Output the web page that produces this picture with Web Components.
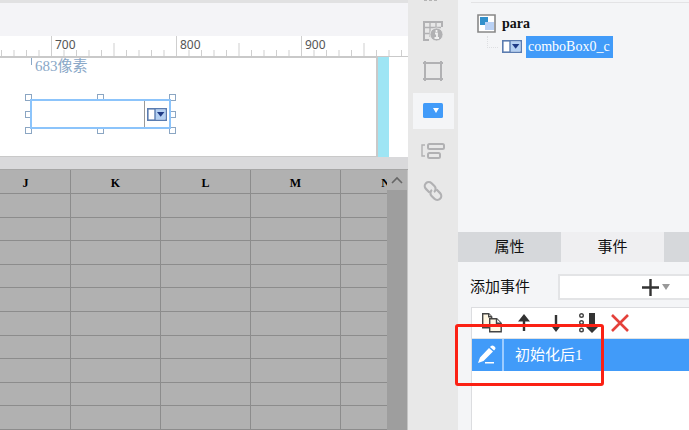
<!DOCTYPE html>
<html lang="zh-CN">
<head>
<meta charset="utf-8">
<title>报表设计器</title>
<style>
html,body{margin:0;height:100%}
body{font:15px/20px "Liberation Sans","Noto Sans CJK SC",sans-serif;color:#222;overflow:hidden}
</style>
</head>
<body>
<designer-app></designer-app>
<script>
const define=(name,html,setup)=>customElements.define(name,class extends HTMLElement{
  constructor(){
    super();
    const t=document.createElement('template');
    t.innerHTML='<style>*{box-sizing:border-box}button{border:0;padding:0;margin:0;background:none;font:inherit;color:inherit}svg{display:block;flex:none}</style>'+html;
    this.attachShadow({mode:'open'}).append(t.content.cloneNode(true));
    if(setup)setup(this,this.shadowRoot);
  }
});

define('combo-icon',`
<style>:host{display:block;flex:none}</style>
<svg width="20" height="13" viewBox="0 0 20 13"><rect x=".8" y=".8" width="18.4" height="11.4" fill="#fff" stroke="#5b7cb0" stroke-width="1.6"/><path d="M8 1.5h10.5v10H8z" fill="#b4d0f2"/><path d="M8 1v11" stroke="#5b7cb0" stroke-width="1.4"/><path d="M10 4h7.4l-3.7 4.8z" fill="#1f3b86"/></svg>`);

define('ruler-mark',`
<style>
:host{display:grid;flex:none;width:125px;height:20px;justify-content:start;overflow:hidden}
:host([partial]){width:51px;justify-content:end}
svg,span{grid-area:1/1}
span{padding-left:4px;font:12px/18px "Noto Sans",sans-serif;color:#555}
</style>
<svg width="125" height="20" viewBox="0 0 125 20" stroke="#cfcfcf"><path d="M.5 0v20M63 7v13M13 14v6M25.5 14v6M38 14v6M50.5 14v6M75.5 14v6M88 14v6M100.5 14v6M113 14v6"/></svg>
<span><slot></slot></span>`);

define('scale-ruler',`
<style>:host{display:flex;height:21px;background:#fff;border-bottom:1px solid #c9c9c9;overflow:hidden}</style>
<ruler-mark partial></ruler-mark><ruler-mark>700</ruler-mark><ruler-mark>800</ruler-mark><ruler-mark>900</ruler-mark>`);

define('selected-combo',`
<style>
:host{display:grid;grid-template-columns:151px;grid-template-rows:40px}
.box,.handles{grid-area:1/1}
.box{margin:5px;display:flex;border:2px solid #8cc4fb;background:#fff}
input{flex:1;min-width:0;border:0;padding:0 4px;outline:0;background:none;border-right:1px solid #999}
button{width:24px;flex:none;display:flex;align-items:center;justify-content:center}
.handles{display:grid;grid-template-columns:repeat(3,7px);grid-template-rows:repeat(3,7px);justify-content:space-between;align-content:space-between;pointer-events:none}
i{border:1px solid #8ba6c3;background:#fff}
i.none{visibility:hidden}
</style>
<div class="handles"><i></i><i></i><i></i><i></i><i class="none"></i><i></i><i></i><i></i><i></i></div>
<div class="box"><input aria-label="comboBox0_c"><button aria-label="展开"><combo-icon></combo-icon></button></div>`);

define('form-canvas',`
<style>
:host{display:flex;height:100px;background:#fff;overflow:hidden}
.page{flex:1;position:relative;border:solid #c9c9c9;border-width:1px 2px 1px 0;overflow:hidden}
.edge{width:11px;background:#9ee5f4;margin-right:19px}
.pos{position:absolute;left:31px;top:0;display:flex;color:#89a7c7;font:15px/16px "Liberation Serif","Noto Sans CJK SC",serif}
.pos::before{content:"";height:7px;border-left:1px solid #89a7c7;margin-right:3px}
selected-combo{position:absolute;left:25px;top:36px}
</style>
<div class="page"><span class="pos">683像素</span><selected-combo></selected-combo></div><div class="edge"></div>`);

define('sheet-grid',`
<style>
:host{display:flex;flex:1;min-height:0;background:#b1b1b1;border-top:1px solid #a6a6a6}
.view{flex:1;min-width:0;overflow:hidden}
table{table-layout:fixed;width:450px;height:100%;margin-left:-19px;border-collapse:separate;border-spacing:0}
th,td{padding:0;border:solid #8c8c8c;border-width:0 1px 1px 0}
th{height:24px;padding-top:4px;font:bold 12px/19px "Liberation Serif",serif;color:#000}
.scroll{width:21px;background:#9e9e9e;border-right:1px solid #c4c4c4}
button{display:flex;width:20px;height:20px;background:#b1b1b1;align-items:center;justify-content:center}
</style>
<div class="view"><table><thead><tr><th>J</th><th>K</th><th>L</th><th>M</th><th>N</th></tr></thead><tbody></tbody></table></div>
<div class="scroll"><button aria-label="向上滚动"><svg width="12" height="8" viewBox="0 0 12 8" fill="none" stroke="#666" stroke-width="1.6"><path d="M1 7l5-5 5 5"/></svg></button></div>`,
(el,root)=>{root.querySelector('tbody').innerHTML=('<tr>'+'<td></td>'.repeat(5)+'</tr>').repeat(10)});

define('design-pane',`
<style>
:host{display:flex;flex-direction:column;flex:1;min-width:0;background:#d9d9db}
.top{height:36px;background:#f4f4f7;border-top:3px solid #e1e1e2}
.gap{height:12px}
</style>
<div class="top"></div><scale-ruler></scale-ruler><form-canvas></form-canvas><div class="gap"></div><sheet-grid></sheet-grid>`);

define('tool-button',`
<style>
:host{display:block}
button{display:flex;width:41px;height:36px;align-items:center;justify-content:center;overflow:hidden}
:host([active]) button{background:#f4f5f7}
:host([cut]) button{height:9px;align-items:start}
</style>
<button><slot></slot></button>`,(el,root)=>root.querySelector('button').setAttribute('aria-label',el.getAttribute('label')));

define('side-toolbar',`
<style>:host{display:flex;flex-direction:column;align-items:center;gap:4px;flex:none;width:50px;background:#e8e8e8}</style>
<tool-button cut label="更多"><svg width="22" height="2" viewBox="0 0 22 2" fill="#b4b4b4"><path d="M2 0h3v1H2zM7 0h3v1H7zM12 0h3v1h-3z"/></svg></tool-button>
<tool-button label="单元格属性"><svg width="22" height="22" viewBox="0 0 22 22" fill="none" stroke="#b1b1b3" stroke-width="2"><path d="M7 20H2V2h18v5"/><path d="M2 7.5h17M8 2v15M2 13.5h6M14 2v6" stroke-width="1.3"/><circle cx="14.5" cy="14.5" r="6.5" fill="#b1b1b3" stroke="#e8e8e8" stroke-width=".8"/><path d="M14.5 10v2M13 13.5h2v4M12.5 18h4.5" stroke="#f1f1f1" stroke-width="1.8"/></svg></tool-button>
<tool-button label="悬浮元素"><svg width="22" height="22" viewBox="0 0 22 22" fill="none" stroke="#b1b1b3" stroke-width="2"><path d="M3 3h16v16H3z"/><path d="M1 3h4M17 3h4M1 19h4M17 19h4M3 1v4M19 1v4M3 17v4M19 17v4"/></svg></tool-button>
<tool-button active label="控件设置"><svg width="22" height="16" viewBox="0 0 22 16"><rect x="1" width="20" height="15" rx="1.5" fill="#419bf9"/><path d="M11 5h6l-3 5z" fill="#fff"/></svg></tool-button>
<tool-button label="条件属性"><svg width="24" height="18" viewBox="0 0 24 18" fill="none" stroke="#b1b1b3" stroke-width="2"><path d="M4 3H1v11h3" stroke-width="1.4"/><rect x="7" y="2" width="16" height="5" rx="1.5"/><rect x="7" y="11" width="12" height="5" rx="1.5"/></svg></tool-button>
<tool-button label="超级链接"><svg width="22" height="22" viewBox="0 0 22 22" fill="none" stroke="#b1b1b3" stroke-width="2.2"><g transform="rotate(45 11 11)"><path d="M9.500 14.500H4.500a4 4 0 0 1 0-8h4a4 4 0 0 1 4 4.500M12.500 7.500h5a4 4 0 0 1 0 8h-4a4 4 0 0 1-4-4.500"/></g></svg></tool-button>`);

define('widget-tree',`
<style>
:host{display:block;height:230px;margin:2px 0 0 13px;border-top:1px solid #e3e3e5;font:14px/22px "Liberation Serif",serif}
ul{list-style:none;margin:0;padding:9px 0 0 6px}
li{display:flex;align-items:center;height:23px;gap:6px;color:#111}
li.child{gap:4px;padding-left:10px}
.branch{width:11px;height:12px;margin-bottom:10px;border:dotted #dedfe2;border-width:0 0 1px 1px}
b{background:#419bf9;color:#fff;font-weight:normal;padding:0 3px 0 2px}
.root{font-weight:bold}
</style>
<ul><li class="root"><svg width="19" height="19" viewBox="0 0 19 19"><path d="M1 1h17v17H1z" fill="#fff" stroke="#888" stroke-width="1.6"/><path d="M3 3h8v8H3z" fill="#318fcb"/><path d="M8 8h9v8H8z" fill="#b9d1f5"/></svg>para</li>
<li class="child"><span class="branch"></span><combo-icon></combo-icon><b>comboBox0_c</b></li></ul>`);

define('panel-tabs',`
<style>
:host{display:flex;height:30px;overflow:hidden;background:#d6d8db}
button{flex:none;width:103px;background:#d6d8db;color:#111}
button[aria-selected=true]{background:#efeff1}
</style>
<button role="tab">属性</button><button role="tab" aria-selected="true">事件</button>`);

define('add-event',`
<style>
:host{display:flex;align-items:center;height:26px;margin:12px 0 7px 12px;gap:28px;color:#111}
button{flex:1;height:26px;display:flex;align-items:center;justify-content:flex-end;gap:3px;padding-right:19px;background:#fff;border:2px solid #e3e4e6;border-right:0}
</style>
<label for="add">添加事件</label><button id="add"><svg width="17" height="17" viewBox="0 0 17 17" stroke="#333" stroke-width="2.4"><path d="M8.5 0v17M0 8.5h17"/></svg><svg width="8" height="6" viewBox="0 0 8 6" fill="#999"><path d="M0 0h8L4 6z"/></svg></button>`);

define('event-list',`
<style>
:host{display:flex;flex-direction:column;flex:1;margin-left:13px;background:#fff;border:solid #dcdde0;border-width:1px 0 0 1px}
.bar{display:flex;align-items:center;height:31px;padding-left:8px;gap:8px;border-bottom:1px solid #dfe2e5}
.bar button{width:24px;height:24px;display:flex;align-items:center;justify-content:center}
.row{display:flex;height:32px;background:#419bf9;color:#fff}
.edit{width:32px;display:flex;align-items:center;justify-content:center;border-right:2px solid #9dccff}
.name{padding-left:11px;font:15px/32px "Liberation Serif","Noto Sans CJK SC",sans-serif}
</style>
<div class="bar">
<button aria-label="复制"><svg width="22" height="22" viewBox="0 0 22 22" fill="#fff7e3" stroke="#444" stroke-width="1.4"><path d="M1.7 1.7h6l3 3v11h-9z"/><path d="M7.7 1.7v3h3" fill="#fff"/><path d="M8.7 6.7h7l4.5 4.5v8.5H8.7z"/><path d="M15.5 6.7v4.5H20" fill="#fff"/></svg></button>
<button aria-label="上移"><svg width="14" height="18" viewBox="0 0 14 18" fill="#333"><path d="M7 0l6 7.5H8.2V17H5.8V7.5H1z"/></svg></button>
<button aria-label="下移"><svg width="14" height="18" viewBox="0 0 14 18" fill="#333"><path d="M7 18l5-6.5H8.2V1H5.8v10.5H2z"/></svg></button>
<button aria-label="移至底部"><svg width="20" height="20" viewBox="0 0 20 20" fill="#333"><g fill="none" stroke="#444" stroke-width="1.4"><circle cx="3.5" cy="2.5" r="1.8"/><circle cx="3.5" cy="9.5" r="1.8"/><circle cx="3.5" cy="17" r="1.8"/></g><path d="M11 0h6v14h3l-6 6-6-6h3z"/></svg></button>
<button aria-label="删除"><svg width="18" height="18" viewBox="0 0 18 18" stroke="#e4413a" stroke-width="2.6"><path d="M1 1l16 16M17 1L1 17"/></svg></button>
</div>
<div class="row"><button class="edit" aria-label="编辑"><svg width="20" height="20" viewBox="0 0 20 20" fill="#fff"><path d="M1 18l2-5.5L12 3l4 3.500L6.500 16zM13 2l1-1q1.500-1 3.500.5t.500 3l-1 1zM8 17h9v1.500H8z"/></svg></button><span class="name">初始化后1</span></div>`);

define('property-pane',`
<style>
:host{display:flex;flex-direction:column;flex:none;width:231px;background:#f4f5f7;position:relative}
.mark{position:absolute;left:-3px;top:324px;width:149px;height:62px;border:3px solid #fb2114;border-radius:3px;pointer-events:none}
</style>
<widget-tree></widget-tree><panel-tabs></panel-tabs><add-event></add-event><event-list></event-list><div class="mark"></div>`);

define('designer-app',`
<style>:host{display:flex;height:100vh;overflow:hidden}</style>
<design-pane></design-pane><side-toolbar></side-toolbar><property-pane></property-pane>`);
</script>
</body>
</html>
